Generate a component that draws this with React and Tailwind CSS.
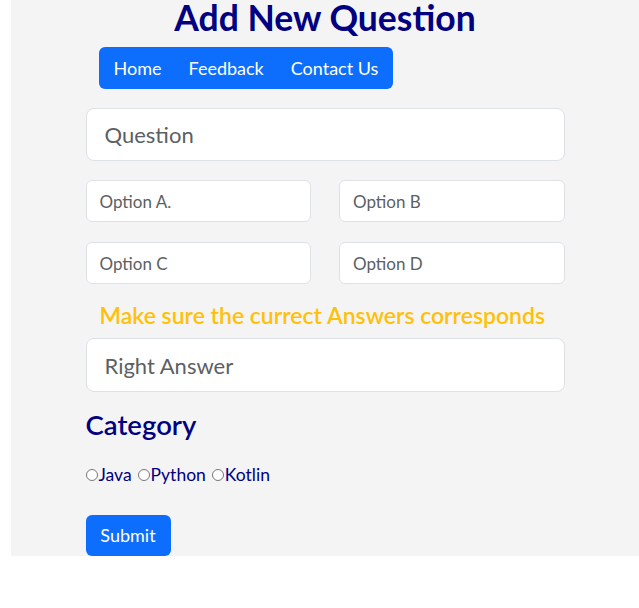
import { useState } from "react";

export default function App() {
  const [form, setForm] = useState({
    question: "",
    a: "",
    b: "",
    c: "",
    d: "",
    answer: "",
    category: "",
  });

  const handleChange = (e) => {
    setForm({ ...form, [e.target.name]: e.target.value });
  };

  const handleSubmit = (e) => {
    e.preventDefault();
  };

  return (
    <div className="min-h-screen bg-white font-['Lato',sans-serif]">
      <div className="ml-[11px] bg-[#f4f4f4] pt-px">
        <h1 className="-mt-px text-center text-[35.5px] font-bold leading-[36px] text-[#000080]">
          Add New Question
        </h1>

        <form onSubmit={handleSubmit} className="mx-auto w-[479px]">
          {/* Nav */}
          <nav className="ml-[13px] mt-[11px] inline-flex h-[42px] items-center gap-[27px] rounded-md bg-[#0d6efd] pl-[15px] pr-[15px] text-[18px] text-white">
            <a href="#">Home</a>
            <a href="#">Feedback</a>
            <a href="#">Contact Us</a>
          </nav>

          <input
            name="question"
            value={form.question}
            onChange={handleChange}
            placeholder="Question"
            className="mt-[19px] block h-[53px] w-full rounded-lg border border-[#dee2e6] bg-white px-[18px] text-[22px] text-[#212529] placeholder-[#5c5f63] outline-none"
          />

          {/* Options */}
          <div className="mt-[19px] grid grid-cols-2 gap-x-[28px] gap-y-[20px]">
            {[
              ["a", "Option A."],
              ["b", "Option B"],
              ["c", "Option C"],
              ["d", "Option D"],
            ].map(([key, label]) => (
              <input
                key={key}
                name={key}
                value={form[key]}
                onChange={handleChange}
                placeholder={label}
                className="block h-[42px] w-full rounded-md border border-[#dee2e6] bg-white px-[13px] text-[17px] text-[#212529] placeholder-[#5c5f63] outline-none"
              />
            ))}
          </div>

          <h4 className="ml-[14px] mt-[17px] text-[23px] font-semibold leading-[28px] text-[#ffc107]">
            Make sure the currect Answers corresponds
          </h4>

          <input
            name="answer"
            value={form.answer}
            onChange={handleChange}
            placeholder="Right Answer"
            className="mt-[9px] block h-[54px] w-full rounded-lg border border-[#dee2e6] bg-white px-[18px] text-[22px] text-[#212529] placeholder-[#5c5f63] outline-none"
          />

          <h3 className="mt-[17px] text-[27.5px] font-semibold leading-[32px] text-[#000080]">
            Category
          </h3>

          {/* Category radios */}
          <div className="mt-[24px] flex items-center text-[17.5px] leading-[20px] text-[#000080]">
            {["Java", "Python", "Kotlin"].map((lang) => (
              <label key={lang} className="mr-[6px] flex items-center">
                <input
                  type="radio"
                  name="category"
                  value={lang}
                  checked={form.category === lang}
                  onChange={handleChange}
                  className="m-0 mr-px h-[12px] w-[12px]"
                />
                {lang}
              </label>
            ))}
          </div>

          <button
            type="submit"
            className="mt-[30px] block h-[41px] w-[85px] rounded-md bg-[#0d6efd] text-[18px] text-white"
          >
            Submit
          </button>
        </form>
      </div>
    </div>
  );
}
